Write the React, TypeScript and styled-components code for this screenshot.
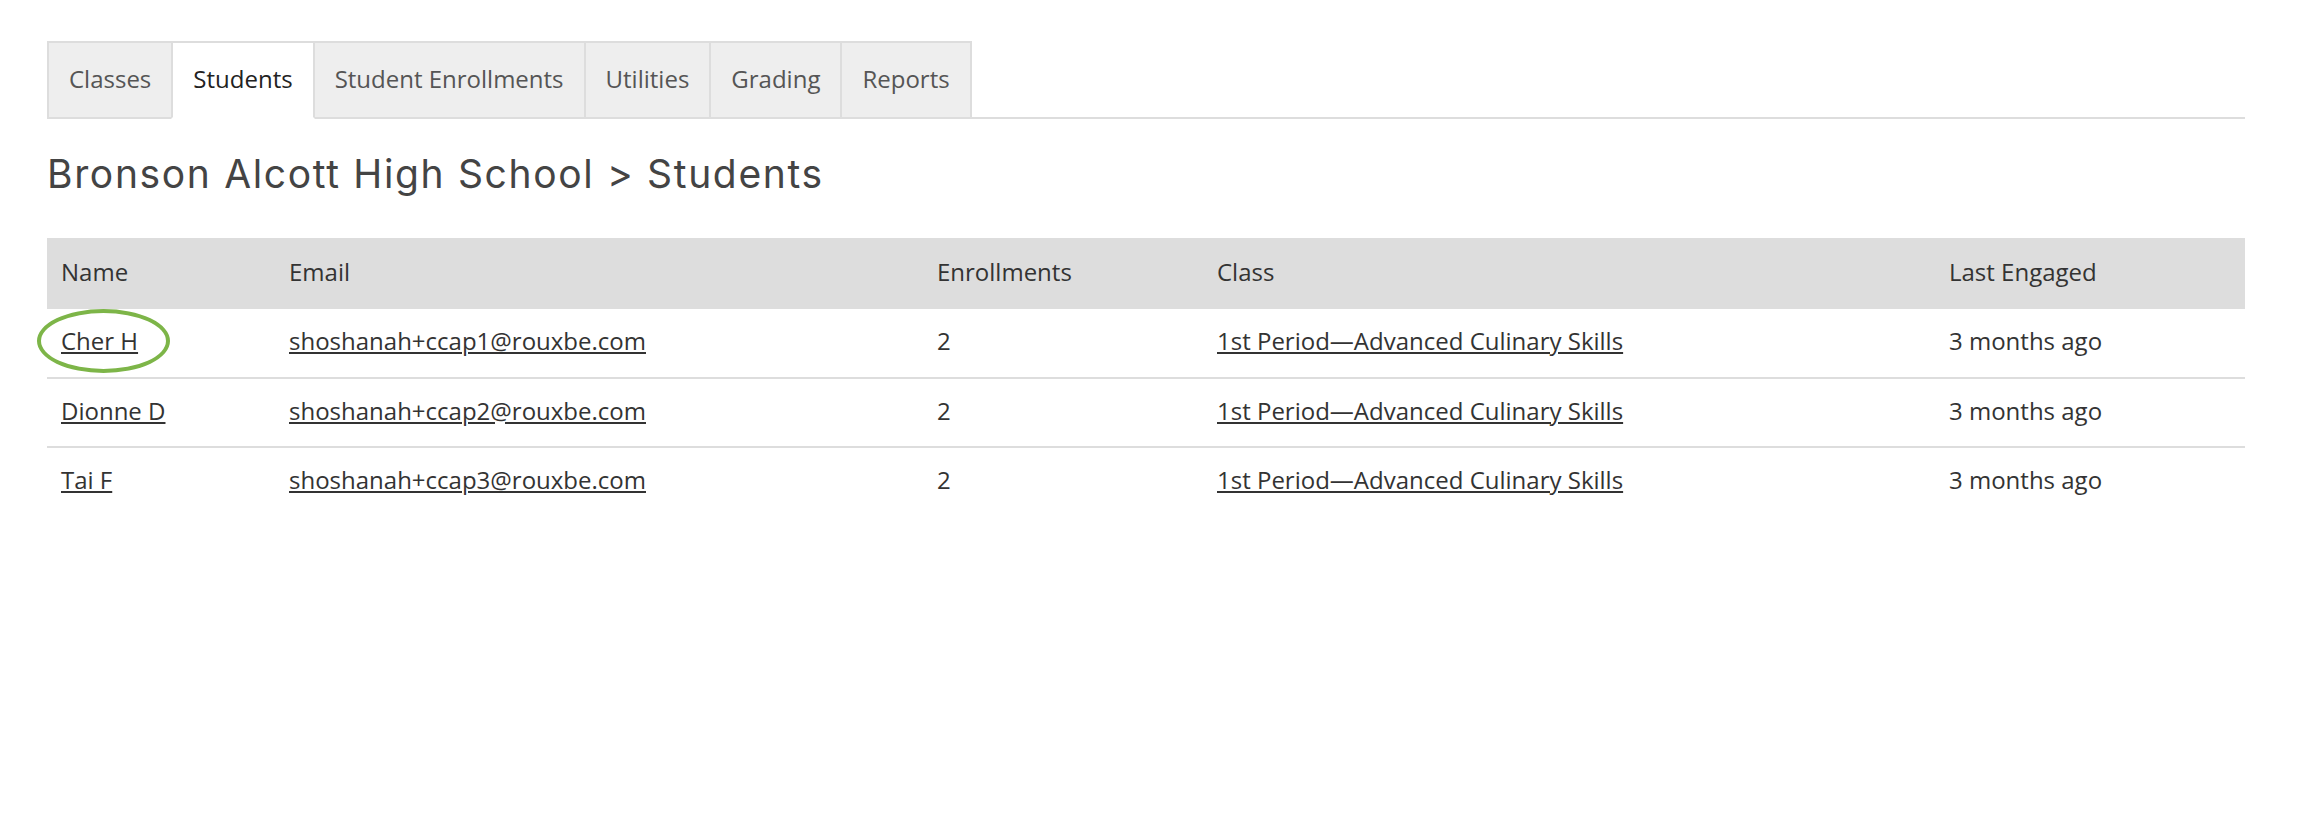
import styled, { createGlobalStyle } from "styled-components";

interface Student {
  name: string;
  email: string;
  enrollments: number;
  className: string;
  lastEngaged: string;
}

const students: Student[] = [
  { name: "Cher H", email: "shoshanah+ccap1@rouxbe.com", enrollments: 2, className: "1st Period—Advanced Culinary Skills", lastEngaged: "3 months ago" },
  { name: "Dionne D", email: "shoshanah+ccap2@rouxbe.com", enrollments: 2, className: "1st Period—Advanced Culinary Skills", lastEngaged: "3 months ago" },
  { name: "Tai F", email: "shoshanah+ccap3@rouxbe.com", enrollments: 2, className: "1st Period—Advanced Culinary Skills", lastEngaged: "3 months ago" }
];

const tabs = ["Classes", "Students", "Student Enrollments", "Utilities", "Grading", "Reports"];

const GlobalStyle = createGlobalStyle`
  body {
    margin: 0;
    background: #fff;
    font-family: "Open Sans", "Noto Sans", sans-serif;
    color: #333;
  }
`;

export default function App() {
  return (
    <>
      <GlobalStyle />
      <Page>
        <TabBar>
          {tabs.map((tab) => (
            <Tab key={tab} $active={tab === "Students"}>{tab}</Tab>
          ))}
        </TabBar>
        <Titulo>Bronson Alcott High School &gt; Students</Titulo>
        <Tabela>
          <thead>
            <tr>
              <Th $width={228}>Name</Th>
              <Th $width={648}>Email</Th>
              <Th $width={280}>Enrollments</Th>
              <Th $width={732}>Class</Th>
              <Th>Last Engaged</Th>
            </tr>
          </thead>
          <tbody>
            {students.map((item, index) => (
              <Linha key={index} $last={index === students.length - 1}>
                <Td>
                  <NameWrap>
                    <Link href="#">{item.name}</Link>
                    {index === 0 && <Destaque />}
                  </NameWrap>
                </Td>
                <Td><Link href="#">{item.email}</Link></Td>
                <Td>{item.enrollments}</Td>
                <Td><Link href="#">{item.className}</Link></Td>
                <Td>{item.lastEngaged}</Td>
              </Linha>
            ))}
          </tbody>
        </Tabela>
      </Page>
    </>
  );
}

const Page = styled.div`
  width: 2198px;
  padding: 41px 0 0 47px;
`;

const TabBar = styled.div`
  display: flex;
  border-bottom: 2px solid #ddd;
  height: 78px;
  box-sizing: border-box;
`;

const Tab = styled.div<{ $active?: boolean }>`
  display: flex;
  align-items: center;
  box-sizing: border-box;
  height: 78px;
  padding: 0 20px 3px 20px;
  margin-left: -2px;
  &:first-child { margin-left: 0; }
  border: 2px solid #ddd;
  border-bottom-color: ${(p) => (p.$active ? "#fff" : "#ddd")};
  background: ${(p) => (p.$active ? "#fff" : "#eee")};
  color: ${(p) => (p.$active ? "#222" : "#555")};
  font-size: 24px;
  position: relative;
  z-index: ${(p) => (p.$active ? 1 : 0)};
`;

const Titulo = styled.h1`
  font-family: Inter, "Noto Sans", sans-serif;
  font-weight: 400;
  font-size: 39px;
  letter-spacing: 1.65px;
  color: #444;
  margin: 27px 0 0 0;
  line-height: 56px;
  height: 92px;
`;

const Tabela = styled.table`
  width: 100%;
  border-collapse: collapse;
  font-size: 24px;
`;

const Th = styled.th<{ $width?: number }>`
  background: #ddd;
  text-align: left;
  font-weight: 400;
  color: #333;
  height: 71px;
  padding: 0 14px 5px 14px;
  box-sizing: border-box;
  width: ${(p) => (p.$width ? `${p.$width}px` : "auto")};
`;

const Linha = styled.tr<{ $last?: boolean }>`
  border-bottom: ${(p) => (p.$last ? "none" : "2px solid #ddd")};
`;

const Td = styled.td`
  height: 69px;
  padding: 0 14px 5px 14px;
  box-sizing: border-box;
  color: #333;
`;

const NameWrap = styled.span`
  position: relative;
  display: inline-block;
`;

const Link = styled.a`
  color: #333;
  text-decoration: underline;
`;

const Destaque = styled.span`
  position: absolute;
  left: -24px;
  top: -15px;
  width: 133px;
  height: 64px;
  box-sizing: border-box;
  border: 4px solid #7db548;
  border-radius: 50%;
  pointer-events: none;
`;
